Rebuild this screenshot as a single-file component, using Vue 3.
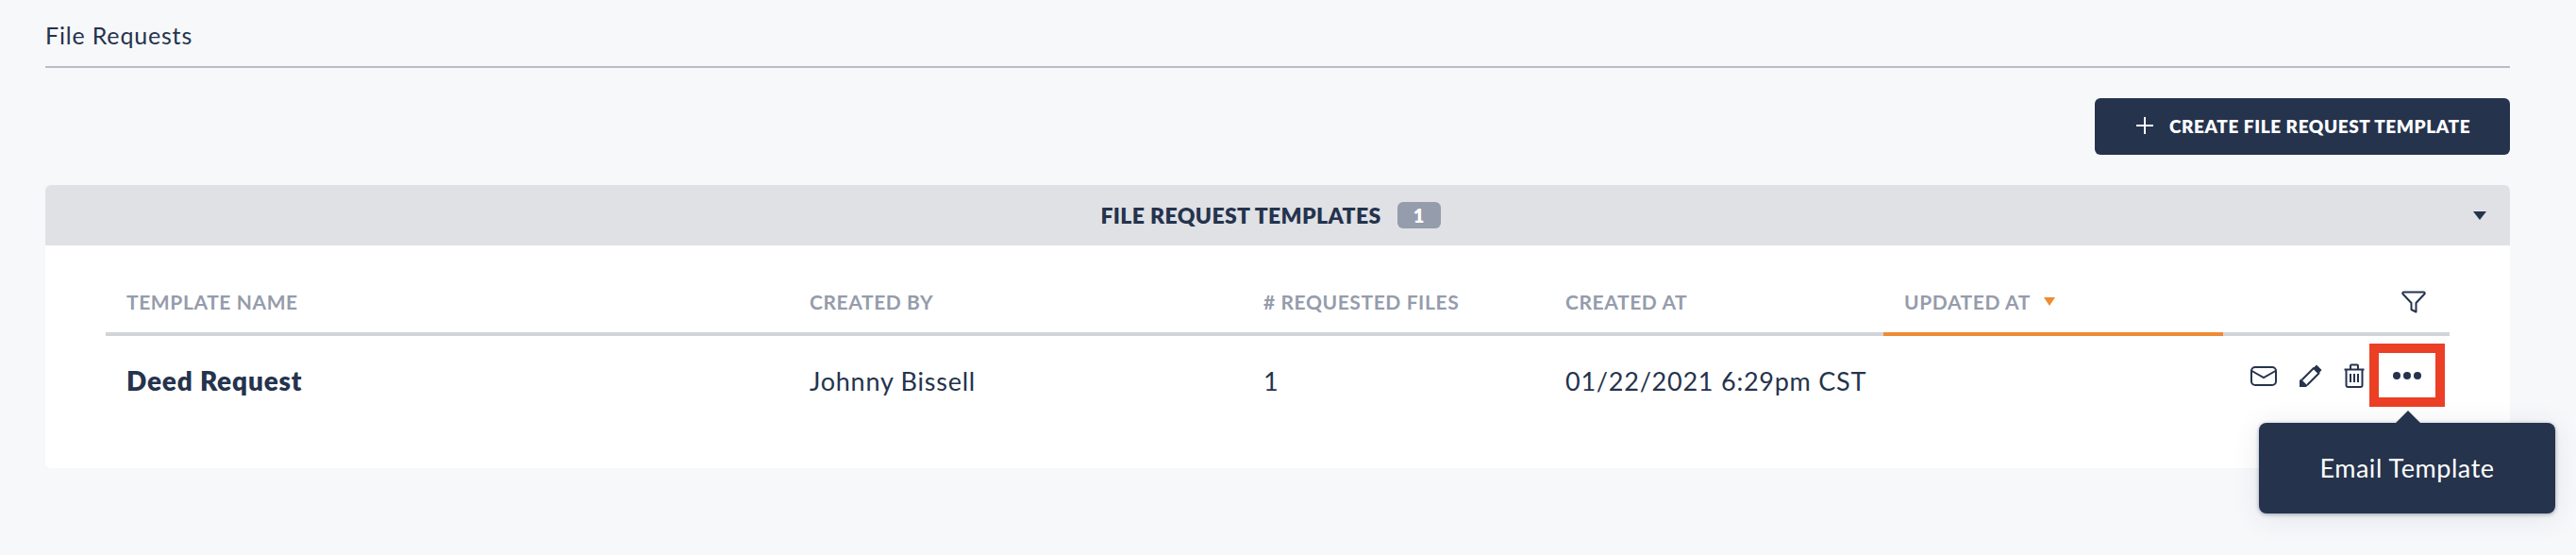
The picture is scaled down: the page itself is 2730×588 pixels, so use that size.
<script setup>
const columns = [
  { label: 'TEMPLATE NAME', cls: 'c1' },
  { label: 'CREATED BY', cls: 'c2' },
  { label: '# REQUESTED FILES', cls: 'c3' },
  { label: 'CREATED AT', cls: 'c4' },
]
</script>

<template>
  <div class="page">
    <div class="title">File Requests</div>
    <div class="toolbar">
      <button class="create">
        <svg class="plus" width="18" height="18" viewBox="0 0 18 18"><path d="M9 0v18M0 9h18" stroke="#fff" stroke-width="2" fill="none"/></svg>
        <span>CREATE FILE REQUEST TEMPLATE</span>
      </button>
    </div>
    <section class="panel">
      <header class="panel-head">
        <span class="panel-title">FILE REQUEST TEMPLATES</span>
        <span class="badge">1</span>
        <span class="head-caret"></span>
      </header>
      <div class="table">
        <div class="row head">
          <div v-for="c in columns" :key="c.label" class="cell" :class="c.cls">{{ c.label }}</div>
          <div class="cell c5 sorted">UPDATED AT<span class="sort-caret"></span></div>
          <div class="cell c6 filter">
            <svg width="26" height="24" viewBox="0 0 26 24"><path d="M2.500 1.500h21a1.200 1.200 0 0 1 .9 2L15.500 13v9.500l-5-2.500V13L1.600 3.500a1.200 1.200 0 0 1 .9-2z" fill="none" stroke="#25334d" stroke-width="2" stroke-linejoin="round"/></svg>
          </div>
        </div>
        <div class="row body">
          <div class="cell c1 name">Deed Request</div>
          <div class="cell c2">Johnny Bissell</div>
          <div class="cell c3">1</div>
          <div class="cell c4">01/22/2021 6:29pm CST</div>
          <div class="cell c5"></div>
          <div class="cell c6 actions">
            <svg class="i-mail" width="28" height="21" viewBox="0 0 28 21"><rect x="1" y="1" width="26" height="19" rx="4" fill="none" stroke="#25334d" stroke-width="2"/><path d="M1.500 5l12.500 7 12.500-7" fill="none" stroke="#25334d" stroke-width="2"/></svg>
            <svg class="i-pen" width="25" height="25" viewBox="0 0 25 25"><path d="M3.500 16.500L16 4l5.500 5.500L9 22" fill="none" stroke="#25334d" stroke-width="2" stroke-linejoin="round"/><path d="M1 24v-7l1.500-1.500 7 7L8 24zM16 3.500L19 .5 24.500 6 21.500 9.500z" fill="#25334d"/></svg>
            <svg class="i-trash" width="24" height="26" viewBox="0 0 24 26"><path d="M1.500 6.500h21M8 6V2.500a1 1 0 0 1 1-1h6a1 1 0 0 1 1 1V6M3.500 7v16a2 2 0 0 0 2 2h13a2 2 0 0 0 2-2V7" fill="none" stroke="#25334d" stroke-width="2" stroke-linejoin="round"/><path d="M8 11v9M12 11v9M16 11v9" fill="none" stroke="#25334d" stroke-width="2"/></svg>
            <span class="more">
              <i></i><i></i><i></i>
            </span>
          </div>
        </div>
      </div>
    </section>
    <div class="tooltip">Email Template</div>
  </div>
</template>

<style>
html, body { margin: 0; background: #f7f8fa; }
</style>

<style scoped>
.page {
  position: relative;
  width: 2730px;
  height: 588px;
  box-sizing: border-box;
  padding: 0 70px 0 48px;
  background: #f7f8fa;
  color: #25334d;
  font-family: Lato, "Open Sans", sans-serif;
  overflow: hidden;
}
.title {
  height: 70px;
  border-bottom: 2px solid #b8bdc5;
  font-size: 25px;
  line-height: 74px;
  letter-spacing: 0.82px;
}
.toolbar {
  display: flex;
  justify-content: flex-end;
  padding-top: 32px;
}
.create {
  display: flex;
  align-items: center;
  width: 440px;
  height: 60px;
  padding: 0 0 2px 44px;
  box-sizing: border-box;
  border: 0;
  border-radius: 6px;
  background: #25334d;
  color: #fff;
  font: 800 19px Lato, sans-serif;
  letter-spacing: 0.57px;
}
.plus { margin-right: 17px; }
.panel {
  margin-top: 32px;
  height: 300px;
  border-radius: 6px;
  background: #fff;
  overflow: hidden;
}
.panel-head {
  position: relative;
  display: flex;
  align-items: center;
  justify-content: center;
  gap: 17px;
  height: 64px;
  background: #dfe1e5;
  padding-right: 15px;
}
.panel-title {
  font-size: 23px;
  font-weight: 800;
  letter-spacing: 0.36px;
}
.badge {
  width: 46px;
  height: 28px;
  border-radius: 6px;
  background: #959cab;
  color: #fff;
  font-size: 20px;
  font-weight: 800;
  line-height: 28px;
  text-align: center;
}
.head-caret {
  position: absolute;
  right: 25px;
  top: 28px;
  border-left: 7px solid transparent;
  border-right: 7px solid transparent;
  border-top: 9px solid #25334d;
}
.table {
  margin: 0 64px;
}
.row {
  display: grid;
  grid-template-columns: 724px 481px 320px 337px 360px 240px;
  padding-left: 22px;
}
.cell { display: flex; align-items: center; }
.head {
  height: 92px;
  box-sizing: content-box;
  border-bottom: 4px solid #d1d5da;
  color: #959cab;
  font-size: 21px;
  font-weight: 700;
  letter-spacing: 0.6px;
}
.head .cell { height: 92px; padding-top: 27px; box-sizing: border-box; }
.head .sorted {
  height: 96px;
  padding-left: 22px;
  padding-top: 27px;
  border-bottom: 4px solid #ef8b33;
}
.sort-caret {
  margin-left: 14px;
  border-left: 6px solid transparent;
  border-right: 6px solid transparent;
  border-top: 9px solid #ef8b33;
}
.filter { justify-content: flex-end; padding-right: 25px; }
.body {
  height: 84px;
  color: #25334d;
  font-size: 27px;
  letter-spacing: 0.76px;
}
.body .cell { padding-top: 10px; box-sizing: border-box; }
.name {
  font-size: 28px;
  font-weight: 800;
  letter-spacing: 0.8px;
}
.body .actions {
  justify-content: flex-end;
  padding-top: 0;
}
.i-mail { margin-right: 23px; }
.i-pen { margin-right: 22px; }
.i-trash { margin-right: 4px; }
.more {
  display: flex;
  align-items: center;
  justify-content: center;
  gap: 3px;
  width: 80px;
  height: 67px;
  box-sizing: border-box;
  border: 10px solid #eb4025;
  margin-right: 5px;
  margin-bottom: 1px;
}
.more i {
  width: 8px;
  height: 8px;
  border-radius: 50%;
  background: #25334d;
}
.tooltip {
  position: absolute;
  left: 2394px;
  top: 448px;
  width: 314px;
  height: 96px;
  border-radius: 8px;
  background: #25334d;
  color: #fff;
  font-size: 27px;
  line-height: 96px;
  letter-spacing: 0.55px;
  text-align: center;
  box-shadow: 0 1px 4px rgba(37, 51, 77, 0.4), 0 4px 30px rgba(37, 51, 77, 0.1);
}
.tooltip::before {
  content: "";
  position: absolute;
  left: 145px;
  top: -13px;
  border-left: 13px solid transparent;
  border-right: 13px solid transparent;
  border-bottom: 13px solid #25334d;
}
</style>
